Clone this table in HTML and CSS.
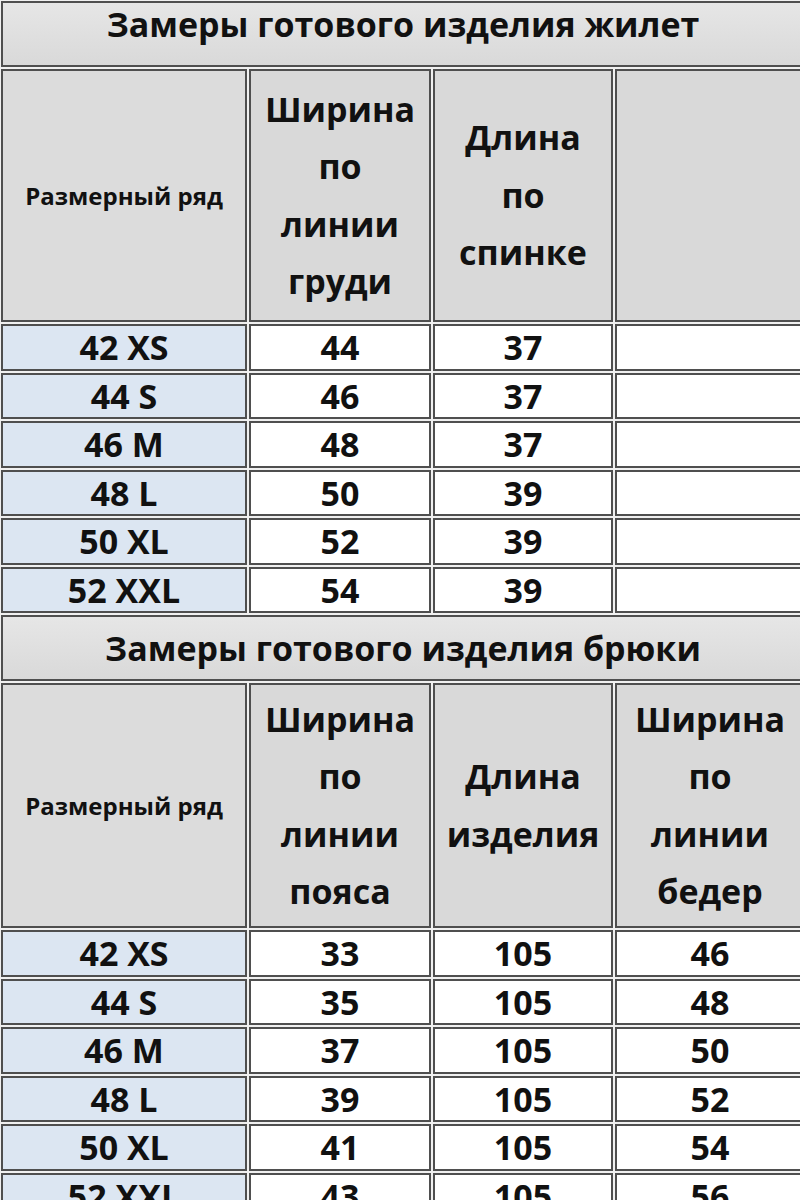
FILE: index.html
```html
<!DOCTYPE html>
<html lang="ru">
<head>
<meta charset="utf-8">
<title>Замеры готового изделия</title>
<link rel="stylesheet" href="styles.css">
</head>
<body>
<div class="sheet">
<table class="grid">
  <colgroup>
    <col class="c1"><col class="c2"><col class="c3"><col class="c4">
  </colgroup>
  <tbody>
    <tr><td colspan="4" class="title title-first">Замеры готового изделия жилет</td></tr>
    <tr class="head head-first">
      <td class="label">Размерный ряд</td>
      <td>Ширина<br>по<br>линии<br>груди</td>
      <td>Длина<br>по<br>спинке</td>
      <td></td>
    </tr>
    <tr class="row"><td class="size">42 XS</td><td>44</td><td>37</td><td></td></tr>
    <tr class="row"><td class="size">44 S</td><td>46</td><td>37</td><td></td></tr>
    <tr class="row"><td class="size">46 M</td><td>48</td><td>37</td><td></td></tr>
    <tr class="row"><td class="size">48 L</td><td>50</td><td>39</td><td></td></tr>
    <tr class="row"><td class="size">50 XL</td><td>52</td><td>39</td><td></td></tr>
    <tr class="row"><td class="size">52 XXL</td><td>54</td><td>39</td><td></td></tr>
    <tr><td colspan="4" class="title">Замеры готового изделия брюки</td></tr>
    <tr class="head head-second">
      <td class="label">Размерный ряд</td>
      <td>Ширина<br>по<br>линии<br>пояса</td>
      <td>Длина<br>изделия</td>
      <td>Ширина<br>по<br>линии<br>бедер</td>
    </tr>
    <tr class="row"><td class="size">42 XS</td><td>33</td><td>105</td><td>46</td></tr>
    <tr class="row"><td class="size">44 S</td><td>35</td><td>105</td><td>48</td></tr>
    <tr class="row"><td class="size">46 M</td><td>37</td><td>105</td><td>50</td></tr>
    <tr class="row"><td class="size">48 L</td><td>39</td><td>105</td><td>52</td></tr>
    <tr class="row"><td class="size">50 XL</td><td>41</td><td>105</td><td>54</td></tr>
    <tr class="row"><td class="size">52 XXL</td><td>43</td><td>105</td><td>56</td></tr>
  </tbody>
</table>
</div>
</body>
</html>
```
FILE: styles.css
```css
html, body {
  margin: 0;
  padding: 0;
  background: #ffffff;
}

.sheet {
  width: 800px;
  height: 1200px;
  overflow: hidden;
  background: #f0f0f0;
}

.grid {
  table-layout: fixed;
  border-collapse: separate;
  border-spacing: 2px;
  width: 808px;
  margin: -1px 0 0 -1px;
  background: #f0f0f0;
  font-family: "Open Sans", "Noto Sans", sans-serif;
  font-weight: 700;
  color: #111111;
}

.c1 { width: 246px; }
.c2 { width: 182px; }
.c3 { width: 180px; }
.c4 { width: 190px; }

.grid td {
  box-sizing: border-box;
  border: 2px solid #4f4f4f;
  padding: 0;
  text-align: center;
  vertical-align: middle;
  font-size: 34px;
  background: #ffffff;
}

.grid td.title {
  height: 66px;
  background: linear-gradient(#e6e6e6, #d9d9d9);
  font-size: 34px;
  line-height: 62px;
}

.grid td.title-first {
  line-height: 42px;
  padding-bottom: 20px;
}

.head td {
  background: #d9d9d9;
  line-height: 57.5px;
}

.head-first td { height: 253px; }
.head-second td { height: 245px; }

.head td.label {
  font-size: 24px;
  line-height: 30px;
  background: #dcdcdc;
}

.row td {
  height: 46.5px;
  line-height: 42px;
}

.row td.size {
  background: #dce6f2;
}
```
